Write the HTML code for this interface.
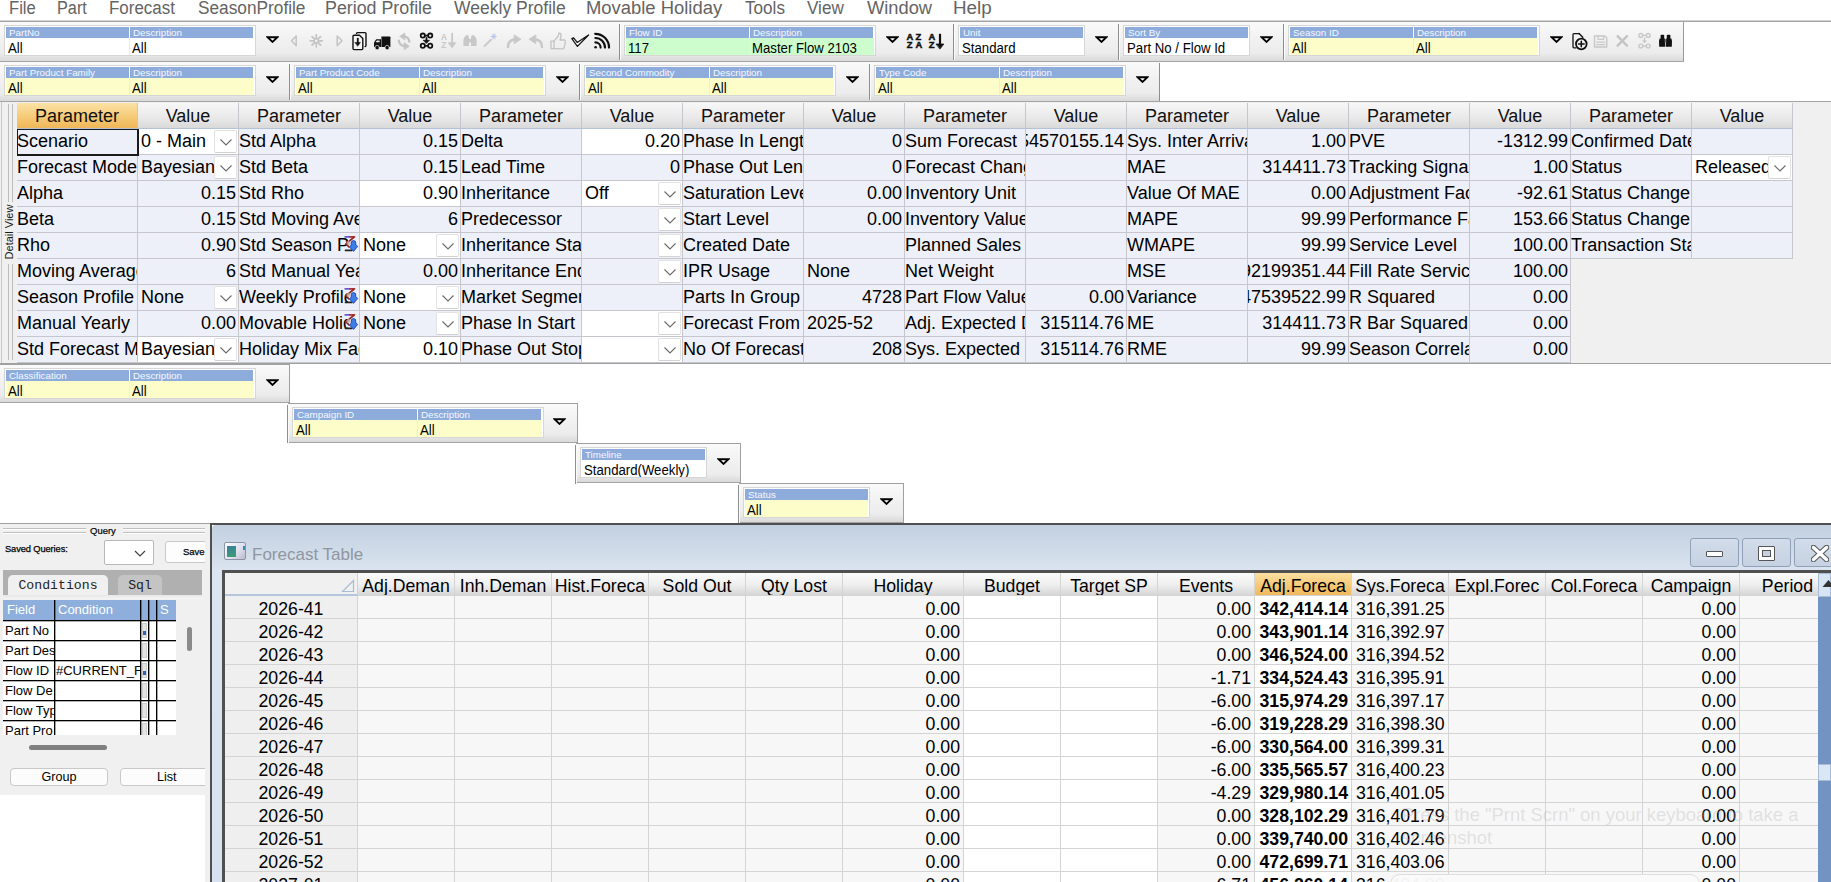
<!DOCTYPE html><html><head><meta charset="utf-8"><title>Forecast</title><style>
*{margin:0;padding:0;box-sizing:border-box}
html,body{width:1831px;height:882px;overflow:hidden;background:#fff;font-family:"Liberation Sans",sans-serif;color:#000;position:relative}
.a{position:absolute}
.menu{position:absolute;top:-2px;font-size:18px;color:#646464;line-height:20px;white-space:nowrap}
.ts{position:absolute;background:linear-gradient(#fafafa 0%,#f1f1f1 45%,#ececec 80%,#d9d9d9 100%);border-bottom:1px solid #a4a4a4}
.vs{position:absolute;width:1px;background:#8e8e8e;box-shadow:1px 0 0 #fbfbfb}
.fb{position:absolute;border:1px solid #d6d6d6;background:#fff;padding:1px}
.fbh{position:absolute;top:1px;height:11px;background:#8dacdc;color:#f4f8ff;font-size:9.8px;line-height:12px;white-space:nowrap;overflow:hidden;padding-left:3px}
.fbv{position:absolute;top:12px;height:17px;font-size:13.2px;line-height:22px;white-space:nowrap;overflow:hidden;padding-left:2px;color:#000}
.fbv span{display:inline-block;transform:scaleY(1.14);transform-origin:0 15.6px;vertical-align:top}
.tri{position:absolute}
.ic{position:absolute}
.g{position:absolute;overflow:hidden;white-space:nowrap;font-size:18px;line-height:24px;border-right:1px solid #c6c6cc;border-bottom:1px solid #c6c6cc}
.gh{background:linear-gradient(#f7f7f7,#e9e9e9 60%,#d9d9d9);text-align:center;color:#111;line-height:26px;border-bottom-color:#b4c2d6}
.gho{background:linear-gradient(#fbe2a6,#f5c873 60%,#efb75a);text-align:center;color:#111;line-height:26px;border-bottom-color:#b4c2d6}
.gc{background:#eef0f9;padding-left:0}
.gv{padding-left:3px}
.gw{background:#fff}
.gr{display:flex;justify-content:flex-end;padding-right:2px}
.dd{position:absolute;width:23px;height:23px;background:#fff;border:1px solid #e2e2e2;border-bottom-color:#d2d2d2;border-radius:2px}
.ft{position:absolute;overflow:hidden;white-space:nowrap;font-size:17.7px;line-height:26px;border-right:1px solid #d4d4d4;border-bottom:1px solid #d4d4d4}
.fth{background:linear-gradient(#fbfbfb,#eeeeee 55%,#d6d6d6);text-align:center}
.ftc{background:#f7f7f7;text-align:right;padding-right:3px}
.ftw{background:#fff}
.q{position:absolute;font-size:13px;white-space:nowrap;overflow:hidden}
</style></head><body>
<div class="menu" style="left:9.2px;transform:scaleX(0.923);transform-origin:0 0">File</div>
<div class="menu" style="left:57.2px;transform:scaleX(0.903);transform-origin:0 0">Part</div>
<div class="menu" style="left:109.1px;transform:scaleX(0.941);transform-origin:0 0">Forecast</div>
<div class="menu" style="left:197.5px;transform:scaleX(0.959);transform-origin:0 0">SeasonProfile</div>
<div class="menu" style="left:325.0px;transform:scaleX(0.99);transform-origin:0 0">Period Profile</div>
<div class="menu" style="left:454.0px;transform:scaleX(0.974);transform-origin:0 0">Weekly Profile</div>
<div class="menu" style="left:586.0px;transform:scaleX(1.023);transform-origin:0 0">Movable Holiday</div>
<div class="menu" style="left:745.0px;transform:scaleX(0.951);transform-origin:0 0">Tools</div>
<div class="menu" style="left:807.0px;transform:scaleX(0.949);transform-origin:0 0">View</div>
<div class="menu" style="left:867.0px;transform:scaleX(1.016);transform-origin:0 0">Window</div>
<div class="menu" style="left:952.9px;transform:scaleX(1.044);transform-origin:0 0">Help</div>
<div class="a" style="left:0;top:20px;width:1831px;height:1px;background:#d2d2d2"></div>
<div class="a" style="left:0;top:21px;width:1831px;height:1px;background:#a4a4a4"></div>
<div class="ts" style="left:0px;top:22px;width:1683px;height:40px"></div>
<div class="vs" style="left:619px;top:24px;height:36px"></div>
<div class="vs" style="left:953px;top:24px;height:36px"></div>
<div class="vs" style="left:1118px;top:24px;height:36px"></div>
<div class="vs" style="left:1283px;top:24px;height:36px"></div>
<div class="a" style="left:1683px;top:22px;width:1px;height:40px;background:#9a9a9a"></div>
<div class="fb" style="left:4px;top:25px;width:252px;height:31px">
<div class="fbh" style="left:1px;width:123px">PartNo</div>
<div class="fbh" style="left:125px;width:123px">Description</div>
<div class="fbv" style="left:1px;width:124px;background:#fff;border-right:1px solid #eeeedd"><span>All</span></div>
<div class="fbv" style="left:125px;width:124px;background:#fff"><span>All</span></div>
</div>
<svg class="tri" style="left:266px;top:35px" width="13" height="8" viewBox="0 0 13 8"><path d="M1.6 2.3 L11.4 2.3 L6.5 6.9 Z" fill="#fff" stroke="#000" stroke-width="1.9" stroke-linejoin="miter"/></svg>
<div class="fb" style="left:624px;top:25px;width:252px;height:31px">
<div class="fbh" style="left:1px;width:123px">Flow ID</div>
<div class="fbh" style="left:125px;width:123px">Description</div>
<div class="fbv" style="left:1px;width:124px;background:#cdfdcd;border-right:1px solid #eeeedd"><span>117</span></div>
<div class="fbv" style="left:125px;width:124px;background:#cdfdcd"><span>Master Flow 2103</span></div>
</div>
<svg class="tri" style="left:886px;top:35px" width="13" height="8" viewBox="0 0 13 8"><path d="M1.6 2.3 L11.4 2.3 L6.5 6.9 Z" fill="#fff" stroke="#000" stroke-width="1.9" stroke-linejoin="miter"/></svg>
<div class="fb" style="left:958px;top:25px;width:127px;height:31px">
<div class="fbh" style="left:1px;width:123px">Unit</div>
<div class="fbv" style="left:1px;width:123px;background:#fff"><span>Standard</span></div>
</div>
<svg class="tri" style="left:1095px;top:35px" width="13" height="8" viewBox="0 0 13 8"><path d="M1.6 2.3 L11.4 2.3 L6.5 6.9 Z" fill="#fff" stroke="#000" stroke-width="1.9" stroke-linejoin="miter"/></svg>
<div class="fb" style="left:1123px;top:25px;width:127px;height:31px">
<div class="fbh" style="left:1px;width:123px">Sort By</div>
<div class="fbv" style="left:1px;width:123px;background:#fff"><span>Part No / Flow Id</span></div>
</div>
<svg class="tri" style="left:1260px;top:35px" width="13" height="8" viewBox="0 0 13 8"><path d="M1.6 2.3 L11.4 2.3 L6.5 6.9 Z" fill="#fff" stroke="#000" stroke-width="1.9" stroke-linejoin="miter"/></svg>
<div class="fb" style="left:1288px;top:25px;width:252px;height:31px">
<div class="fbh" style="left:1px;width:123px">Season ID</div>
<div class="fbh" style="left:125px;width:123px">Description</div>
<div class="fbv" style="left:1px;width:124px;background:#fdfdc9;border-right:1px solid #eeeedd"><span>All</span></div>
<div class="fbv" style="left:125px;width:124px;background:#fdfdc9"><span>All</span></div>
</div>
<svg class="tri" style="left:1550px;top:35px" width="13" height="8" viewBox="0 0 13 8"><path d="M1.6 2.3 L11.4 2.3 L6.5 6.9 Z" fill="#fff" stroke="#000" stroke-width="1.9" stroke-linejoin="miter"/></svg>
<div class="ts" style="left:0px;top:62px;width:1160px;height:40px"></div>
<div class="vs" style="left:289px;top:64px;height:36px"></div>
<div class="vs" style="left:579px;top:64px;height:36px"></div>
<div class="vs" style="left:869px;top:64px;height:36px"></div>
<div class="a" style="left:1159px;top:63px;width:1px;height:38px;background:#8e8e8e"></div>
<div class="fb" style="left:4px;top:65px;width:252px;height:31px">
<div class="fbh" style="left:1px;width:123px">Part Product Family</div>
<div class="fbh" style="left:125px;width:123px">Description</div>
<div class="fbv" style="left:1px;width:124px;background:#fdfdc9;border-right:1px solid #eeeedd"><span>All</span></div>
<div class="fbv" style="left:125px;width:124px;background:#fdfdc9"><span>All</span></div>
</div>
<svg class="tri" style="left:266px;top:75px" width="13" height="8" viewBox="0 0 13 8"><path d="M1.6 2.3 L11.4 2.3 L6.5 6.9 Z" fill="#fff" stroke="#000" stroke-width="1.9" stroke-linejoin="miter"/></svg>
<div class="fb" style="left:294px;top:65px;width:252px;height:31px">
<div class="fbh" style="left:1px;width:123px">Part Product Code</div>
<div class="fbh" style="left:125px;width:123px">Description</div>
<div class="fbv" style="left:1px;width:124px;background:#fdfdc9;border-right:1px solid #eeeedd"><span>All</span></div>
<div class="fbv" style="left:125px;width:124px;background:#fdfdc9"><span>All</span></div>
</div>
<svg class="tri" style="left:556px;top:75px" width="13" height="8" viewBox="0 0 13 8"><path d="M1.6 2.3 L11.4 2.3 L6.5 6.9 Z" fill="#fff" stroke="#000" stroke-width="1.9" stroke-linejoin="miter"/></svg>
<div class="fb" style="left:584px;top:65px;width:252px;height:31px">
<div class="fbh" style="left:1px;width:123px">Second Commodity</div>
<div class="fbh" style="left:125px;width:123px">Description</div>
<div class="fbv" style="left:1px;width:124px;background:#fdfdc9;border-right:1px solid #eeeedd"><span>All</span></div>
<div class="fbv" style="left:125px;width:124px;background:#fdfdc9"><span>All</span></div>
</div>
<svg class="tri" style="left:846px;top:75px" width="13" height="8" viewBox="0 0 13 8"><path d="M1.6 2.3 L11.4 2.3 L6.5 6.9 Z" fill="#fff" stroke="#000" stroke-width="1.9" stroke-linejoin="miter"/></svg>
<div class="fb" style="left:874px;top:65px;width:252px;height:31px">
<div class="fbh" style="left:1px;width:123px">Type Code</div>
<div class="fbh" style="left:125px;width:123px">Description</div>
<div class="fbv" style="left:1px;width:124px;background:#fdfdc9;border-right:1px solid #eeeedd"><span>All</span></div>
<div class="fbv" style="left:125px;width:124px;background:#fdfdc9"><span>All</span></div>
</div>
<svg class="tri" style="left:1136px;top:75px" width="13" height="8" viewBox="0 0 13 8"><path d="M1.6 2.3 L11.4 2.3 L6.5 6.9 Z" fill="#fff" stroke="#000" stroke-width="1.9" stroke-linejoin="miter"/></svg>
<svg class="a" style="left:0;top:0;overflow:visible" width="1831" height="62" viewBox="0 0 1831 62">
<g fill="none" stroke-linejoin="round" stroke-linecap="round">
<!-- left arrow gray -->
<path d="M291.5 40.8 L296.2 36 L296.2 45.8 Z" stroke="#c4c4c4" stroke-width="1.5"/>
<!-- sun gray -->
<g stroke="#c4c4c4" stroke-width="1.8">
<path d="M316.3 34.8 V38.4 M316.3 43.2 V46.8 M310.3 40.8 H313.9 M318.7 40.8 H322.3 M312.1 36.6 L314.6 39.1 M318 42.5 L320.5 45 M320.5 36.6 L318 39.1 M314.6 42.5 L312.1 45"/>
<circle cx="316.3" cy="40.8" r="2" stroke-width="1.2"/>
</g>
<!-- right arrow gray -->
<path d="M342 40.8 L337.2 36 L337.2 45.8 Z" stroke="#c4c4c4" stroke-width="1.5"/>
<!-- doc copy black -->
<path d="M356.5 33.5 Q356.5 32.6 357.5 32.6 L365 32.6 Q366 32.6 366 33.6 L366 45.5 Q366 46.6 365 46.6" stroke="#111" stroke-width="1.4"/>
<path d="M353 36.2 Q353 35.2 354 35.2 L359.5 35.2 L362.8 38.5 L362.8 48.6 Q362.8 49.6 361.8 49.6 L354 49.6 Q353 49.6 353 48.6 Z" stroke="#111" stroke-width="1.4" fill="#f4f4f4"/>
<path d="M357.8 38.6 V43.5" stroke="#111" stroke-width="1.8"/>
<path d="M355.2 42.4 L360.4 42.4 L357.8 46 Z" fill="#111" stroke="#111" stroke-width="0.6"/>
<!-- truck black -->
<path d="M381.4 36.4 L389.5 36.4 Q390.4 36.4 390.4 37.3 L390.4 47 L381.4 47 Z" fill="#111" stroke="none"/>
<path d="M374 47 L374 42.5 L376.2 39.2 L381 39.2 L381 47 Z" fill="#111" stroke="none"/>
<path d="M375.6 42.3 L376.8 40.4 L379.6 40.4 L379.6 42.3 Z" fill="#eee" stroke="none"/>
<circle cx="377.2" cy="47.6" r="2.2" fill="#111" stroke="#eee" stroke-width="0.7"/>
<circle cx="387.2" cy="47.6" r="2.2" fill="#111" stroke="#eee" stroke-width="0.7"/>
<!-- refresh gray -->
<path d="M404 36.3 Q408.8 37 409.3 41.6" stroke="#c4c4c4" stroke-width="2.3"/>
<path d="M400 36.3 L404.8 33 L404.8 39.6 Z" fill="#c4c4c4" stroke="#c4c4c4" stroke-width="0.8"/>
<path d="M398.8 40.6 Q399.3 45.4 404.5 46" stroke="#c4c4c4" stroke-width="2.3"/>
<path d="M409 46.1 L404.2 42.6 L404.2 49.4 Z" fill="#c4c4c4" stroke="#c4c4c4" stroke-width="0.8"/>
<!-- nodes black -->
<g stroke="#111" stroke-width="1.8">
<circle cx="422.8" cy="35.6" r="2.1"/><circle cx="430.2" cy="35.6" r="2.1"/>
<circle cx="422.8" cy="45.8" r="2.1"/><circle cx="430.2" cy="45.8" r="2.1"/>
<path d="M424.9 35.6 H428.1 M424.9 45.8 H428.1 M426.5 37.8 V41"/>
</g>
<path d="M423.6 40.3 L429.4 40.3 L426.5 43.2 Z" fill="#111" stroke="#111" stroke-width="0.8"/>
<!-- AZ sort gray -->
<g fill="#c8c8c8" stroke="none" font-family="Liberation Sans" font-weight="bold" font-size="8.2">
<text x="441" y="39.6">A</text><text x="441.2" y="47.6">Z</text>
</g>
<path d="M452.2 33.6 V46" stroke="#c8c8c8" stroke-width="1.8"/>
<path d="M448.6 42.8 L455.8 42.8 L452.2 47.6 Z" fill="#c8c8c8" stroke="#c8c8c8" stroke-width="0.8"/>
<!-- binoculars gray -->
<g fill="#c8c8c8" stroke="none">
<path d="M464 38 L466 35.2 L468.4 35.2 L469 38 L469 46 L463.4 46 L463.4 40 Z"/>
<path d="M476 38 L474 35.2 L471.6 35.2 L471 38 L471 46 L476.6 46 L476.6 40 Z"/>
<rect x="468.6" y="39" width="2.8" height="3.5"/>
</g>
<!-- magic wand -->
<path d="M484.6 46 L491 39.8" stroke="#cacaca" stroke-width="2"/>
<path d="M493.8 34 V39 M491.3 36.5 H496.3 M492 34.7 L495.6 38.3 M495.6 34.7 L492 38.3" stroke="#b8c4e8" stroke-width="1"/>
<!-- redo gray -->
<path d="M508 47 Q508 40 515 39.5" stroke="#c8c8c8" stroke-width="2.4"/>
<path d="M514.5 35.2 L520.8 39.2 L514.5 43.4 Z" fill="#c8c8c8" stroke="#c8c8c8" stroke-width="1"/>
<!-- undo gray -->
<path d="M542 47 Q542 40 535 39.5" stroke="#c8c8c8" stroke-width="2.4"/>
<path d="M535.5 35.2 L529.2 39.2 L535.5 43.4 Z" fill="#c8c8c8" stroke="#c8c8c8" stroke-width="1"/>
<!-- thumbs up gray -->
<path d="M551 41.2 H554 V48.6 H551 Z" stroke="#c4c4c4" stroke-width="1.3"/>
<path d="M554 41.2 L558.2 36 L559 32.8 Q561.5 33.2 561 36.5 L560 40 L564.6 40 Q565.6 40.5 565.3 42 L564.2 47.8 Q563.8 48.8 562.5 48.8 L554 48.6" stroke="#c4c4c4" stroke-width="1.3"/>
<!-- checkmark black outline -->
<path d="M571.8 38.6 L573.6 37.8 L577.2 42.4 L588.6 35 L577.4 46.4 Z" stroke="#111" stroke-width="1.2" fill="#f6f6f6"/>
<!-- rss black -->
<g stroke="#111" stroke-width="2.2" stroke-linecap="round">
<circle cx="595.6" cy="47.2" r="1.3" fill="#111" stroke="none"/>
<path d="M595.4 42.4 A5.2 5.2 0 0 1 600.6 47.6"/>
<path d="M595.4 38 A9.6 9.6 0 0 1 605 47.6"/>
<path d="M595.2 33.8 A13.8 13.8 0 0 1 609 47.6"/>
</g>
<!-- flow: AZ/ZA black -->
<g fill="#111" stroke="#111" stroke-width="0.5" font-family="Liberation Sans" font-weight="bold" font-size="9.4">
<text x="906.6" y="40.2">A</text><text x="915.4" y="40.2">Z</text>
<text x="906.8" y="48">Z</text><text x="915.4" y="48">A</text>
<text x="928.6" y="40.2">A</text><text x="928.8" y="48">Z</text>
</g>
<path d="M940 33.8 V45" stroke="#111" stroke-width="2.2" stroke-linecap="butt"/>
<path d="M936.4 44 L943.8 44 L940.1 48.8 Z" fill="#111" stroke="#111" stroke-width="0.8"/>
<!-- season: doc add black -->
<path d="M1579.5 33.6 L1574 33.6 Q1573 33.6 1573 34.6 L1573 46.8 Q1573 47.8 1574 47.8 L1576 47.8" stroke="#111" stroke-width="1.3"/>
<path d="M1579 33.6 L1582.8 37.2" stroke="#111" stroke-width="1.4"/>
<circle cx="1581.3" cy="44" r="5.3" stroke="#111" stroke-width="1.8" fill="#f4f4f4"/>
<path d="M1581.3 41.2 V46.8 M1578.5 44 H1584.1" stroke="#111" stroke-width="1.6"/>
<!-- save gray -->
<path d="M1594.5 36 L1604.8 36 L1606.8 38 L1606.8 47 L1594.5 47 Z" stroke="#c8c8c8" stroke-width="1.4"/>
<path d="M1598 36 V39.4 H1603.5 V36 M1596.6 42.2 H1604.8 M1596.6 44.6 H1604.8" stroke="#c8c8c8" stroke-width="1.2"/>
<!-- X gray -->
<path d="M1617.6 36.2 L1627 45.6 M1627 36.2 L1617.6 45.6" stroke="#c4c4c4" stroke-width="2.4"/>
<!-- nodes gray -->
<g stroke="#c8c8c8" stroke-width="1.4">
<circle cx="1640.8" cy="35.4" r="1.9"/><circle cx="1648.2" cy="35.4" r="1.9"/>
<circle cx="1640.8" cy="46" r="1.9"/><circle cx="1648.2" cy="46" r="1.9"/>
<path d="M1642.7 35.4 H1646.3 M1642.7 46 H1646.3 M1644.5 38 V41"/>
</g>
<path d="M1641.9 40.5 L1647.1 40.5 L1644.5 43.2 Z" fill="#c8c8c8" stroke="none"/>
<!-- binoculars black -->
<g fill="#111" stroke="none">
<rect x="1660.6" y="34.8" width="3.6" height="4.5" rx="0.8"/>
<rect x="1666.8" y="34.8" width="3.6" height="4.5" rx="0.8"/>
<path d="M1659.6 38.6 L1665 38.6 L1665.2 46.8 L1659.2 46.8 L1659 41 Z"/>
<path d="M1666 38.6 L1671.4 38.6 L1672 41 L1671.8 46.8 L1665.8 46.8 Z"/>
<rect x="1664.6" y="39.2" width="1.8" height="3.2" fill="#666"/>
</g>
</g>
</svg>

<div class="a" style="left:0;top:101px;width:1831px;height:1px;background:#a4a4a4"></div>
<div class="a" style="left:0;top:102px;width:1831px;height:261px;background:#f0f0f0"></div>
<div class="a" style="left:0;top:363px;width:1831px;height:1px;background:#a0a0a0"></div>
<div class="a" style="left:1px;top:102px;width:1px;height:261px;background:#c8c8c8"></div>
<div class="a" style="left:8px;top:104px;width:1px;height:98px;background:#bdbdbd"></div>
<div class="a" style="left:12px;top:104px;width:1px;height:98px;background:#bdbdbd"></div>
<div class="a" style="left:8px;top:264px;width:1px;height:96px;background:#bdbdbd"></div>
<div class="a" style="left:12px;top:264px;width:1px;height:96px;background:#bdbdbd"></div>
<div class="a" style="left:-19px;top:226px;width:55px;height:12px;font-size:11px;line-height:12px;color:#1a1a1a;transform:rotate(-90deg);text-align:center;white-space:nowrap">Detail View</div>
<div class="g gho" style="left:17px;top:103px;width:121px;height:26px">Parameter</div>
<div class="g gh" style="left:138px;top:103px;width:101px;height:26px">Value</div>
<div class="g gc" style="left:17px;top:129px;width:121px;height:26px">Scenario</div>
<div class="g gc gv" style="left:138px;top:129px;width:101px;height:26px;background:#fff;">0 - Main</div>
<div class="dd" style="left:214px;top:130px"><svg width="22" height="21" viewBox="0 0 22 21" style="position:absolute;left:0;top:0"><path d="M5.5 8.5 L11 14 L16.5 8.5" fill="none" stroke="#6a6a6a" stroke-width="1.1"/></svg></div>
<div class="g gc" style="left:17px;top:155px;width:121px;height:26px">Forecast Mode</div>
<div class="g gc gv" style="left:138px;top:155px;width:101px;height:26px;">Bayesian</div>
<div class="dd" style="left:214px;top:156px"><svg width="22" height="21" viewBox="0 0 22 21" style="position:absolute;left:0;top:0"><path d="M5.5 8.5 L11 14 L16.5 8.5" fill="none" stroke="#6a6a6a" stroke-width="1.1"/></svg></div>
<div class="g gc" style="left:17px;top:181px;width:121px;height:26px">Alpha</div>
<div class="g gc gr" style="left:138px;top:181px;width:101px;height:26px;"><span>0.15</span></div>
<div class="g gc" style="left:17px;top:207px;width:121px;height:26px">Beta</div>
<div class="g gc gr" style="left:138px;top:207px;width:101px;height:26px;"><span>0.15</span></div>
<div class="g gc" style="left:17px;top:233px;width:121px;height:26px">Rho</div>
<div class="g gc gr" style="left:138px;top:233px;width:101px;height:26px;"><span>0.90</span></div>
<div class="g gc" style="left:17px;top:259px;width:121px;height:26px">Moving Average</div>
<div class="g gc gr" style="left:138px;top:259px;width:101px;height:26px;"><span>6</span></div>
<div class="g gc" style="left:17px;top:285px;width:121px;height:26px">Season Profile</div>
<div class="g gc gv" style="left:138px;top:285px;width:101px;height:26px;">None</div>
<div class="dd" style="left:214px;top:286px"><svg width="22" height="21" viewBox="0 0 22 21" style="position:absolute;left:0;top:0"><path d="M5.5 8.5 L11 14 L16.5 8.5" fill="none" stroke="#6a6a6a" stroke-width="1.1"/></svg></div>
<div class="g gc" style="left:17px;top:311px;width:121px;height:26px">Manual Yearly</div>
<div class="g gc gr" style="left:138px;top:311px;width:101px;height:26px;"><span>0.00</span></div>
<div class="g gc" style="left:17px;top:337px;width:121px;height:26px">Std Forecast Method</div>
<div class="g gc gv" style="left:138px;top:337px;width:101px;height:26px;background:#fff;">Bayesian</div>
<div class="dd" style="left:214px;top:338px"><svg width="22" height="21" viewBox="0 0 22 21" style="position:absolute;left:0;top:0"><path d="M5.5 8.5 L11 14 L16.5 8.5" fill="none" stroke="#6a6a6a" stroke-width="1.1"/></svg></div>
<div class="g gh" style="left:239px;top:103px;width:121px;height:26px">Parameter</div>
<div class="g gh" style="left:360px;top:103px;width:101px;height:26px">Value</div>
<div class="g gc" style="left:239px;top:129px;width:121px;height:26px">Std Alpha</div>
<div class="g gc gr" style="left:360px;top:129px;width:101px;height:26px;"><span>0.15</span></div>
<div class="g gc" style="left:239px;top:155px;width:121px;height:26px">Std Beta</div>
<div class="g gc gr" style="left:360px;top:155px;width:101px;height:26px;"><span>0.15</span></div>
<div class="g gc" style="left:239px;top:181px;width:121px;height:26px">Std Rho</div>
<div class="g gc gr" style="left:360px;top:181px;width:101px;height:26px;background:#fff;"><span>0.90</span></div>
<div class="g gc" style="left:239px;top:207px;width:121px;height:26px">Std Moving Average</div>
<div class="g gc gr" style="left:360px;top:207px;width:101px;height:26px;"><span>6</span></div>
<div class="g gc" style="left:239px;top:233px;width:121px;height:26px"><span style="display:inline-block;width:109px;overflow:hidden;vertical-align:top">Std Season Profile</span></div>
<div class="g gc gv" style="left:360px;top:233px;width:101px;height:26px;background:#fff;">None</div>
<div class="dd" style="left:436px;top:234px"><svg width="22" height="21" viewBox="0 0 22 21" style="position:absolute;left:0;top:0"><path d="M5.5 8.5 L11 14 L16.5 8.5" fill="none" stroke="#6a6a6a" stroke-width="1.1"/></svg></div>
<svg class="a" style="left:344px;top:234px" width="15" height="19" viewBox="0 0 15 19"><path d="M1.2 2.8 L6 2.8" stroke="#6a5ad0" stroke-width="1.8" stroke-linecap="round"/><path d="M6 2.8 L10.5 2.8" stroke="#b03030" stroke-width="1.8" stroke-linecap="round"/><path d="M10.2 3 L2 9.8 L5.5 13.5" fill="none" stroke="#8a2a2a" stroke-width="1.7" stroke-linejoin="round"/><path d="M1.5 16.4 L7.5 16.4" stroke="#222" stroke-width="1.7" stroke-linecap="round"/><circle cx="4.5" cy="9" r="2" fill="#c8b0a8" opacity=".8"/><path d="M7.5 7.5 Q9.5 5.5 11.5 7.5 L11.8 10.5 L13.6 12.5 L9.5 17.4 L5.6 13.2 L7.2 11 Z" fill="#3d7fe6" stroke="#1a3fb0" stroke-width=".9" stroke-linejoin="round"/></svg>
<div class="g gc" style="left:239px;top:259px;width:121px;height:26px">Std Manual Yearly</div>
<div class="g gc gr" style="left:360px;top:259px;width:101px;height:26px;"><span>0.00</span></div>
<div class="g gc" style="left:239px;top:285px;width:121px;height:26px"><span style="display:inline-block;width:109px;overflow:hidden;vertical-align:top">Weekly Profile</span></div>
<div class="g gc gv" style="left:360px;top:285px;width:101px;height:26px;background:#fff;">None</div>
<div class="dd" style="left:436px;top:286px"><svg width="22" height="21" viewBox="0 0 22 21" style="position:absolute;left:0;top:0"><path d="M5.5 8.5 L11 14 L16.5 8.5" fill="none" stroke="#6a6a6a" stroke-width="1.1"/></svg></div>
<svg class="a" style="left:344px;top:286px" width="15" height="19" viewBox="0 0 15 19"><path d="M1.2 2.8 L6 2.8" stroke="#6a5ad0" stroke-width="1.8" stroke-linecap="round"/><path d="M6 2.8 L10.5 2.8" stroke="#b03030" stroke-width="1.8" stroke-linecap="round"/><path d="M10.2 3 L2 9.8 L5.5 13.5" fill="none" stroke="#8a2a2a" stroke-width="1.7" stroke-linejoin="round"/><path d="M1.5 16.4 L7.5 16.4" stroke="#222" stroke-width="1.7" stroke-linecap="round"/><circle cx="4.5" cy="9" r="2" fill="#c8b0a8" opacity=".8"/><path d="M7.5 7.5 Q9.5 5.5 11.5 7.5 L11.8 10.5 L13.6 12.5 L9.5 17.4 L5.6 13.2 L7.2 11 Z" fill="#3d7fe6" stroke="#1a3fb0" stroke-width=".9" stroke-linejoin="round"/></svg>
<div class="g gc" style="left:239px;top:311px;width:121px;height:26px"><span style="display:inline-block;width:109px;overflow:hidden;vertical-align:top">Movable Holiday</span></div>
<div class="g gc gv" style="left:360px;top:311px;width:101px;height:26px;">None</div>
<div class="dd" style="left:436px;top:312px"><svg width="22" height="21" viewBox="0 0 22 21" style="position:absolute;left:0;top:0"><path d="M5.5 8.5 L11 14 L16.5 8.5" fill="none" stroke="#6a6a6a" stroke-width="1.1"/></svg></div>
<svg class="a" style="left:344px;top:312px" width="15" height="19" viewBox="0 0 15 19"><path d="M1.2 2.8 L6 2.8" stroke="#6a5ad0" stroke-width="1.8" stroke-linecap="round"/><path d="M6 2.8 L10.5 2.8" stroke="#b03030" stroke-width="1.8" stroke-linecap="round"/><path d="M10.2 3 L2 9.8 L5.5 13.5" fill="none" stroke="#8a2a2a" stroke-width="1.7" stroke-linejoin="round"/><path d="M1.5 16.4 L7.5 16.4" stroke="#222" stroke-width="1.7" stroke-linecap="round"/><circle cx="4.5" cy="9" r="2" fill="#c8b0a8" opacity=".8"/><path d="M7.5 7.5 Q9.5 5.5 11.5 7.5 L11.8 10.5 L13.6 12.5 L9.5 17.4 L5.6 13.2 L7.2 11 Z" fill="#3d7fe6" stroke="#1a3fb0" stroke-width=".9" stroke-linejoin="round"/></svg>
<div class="g gc" style="left:239px;top:337px;width:121px;height:26px">Holiday Mix Factor</div>
<div class="g gc gr" style="left:360px;top:337px;width:101px;height:26px;background:#fff;"><span>0.10</span></div>
<div class="g gh" style="left:461px;top:103px;width:121px;height:26px">Parameter</div>
<div class="g gh" style="left:582px;top:103px;width:101px;height:26px">Value</div>
<div class="g gc" style="left:461px;top:129px;width:121px;height:26px">Delta</div>
<div class="g gc gr" style="left:582px;top:129px;width:101px;height:26px;background:#fff;"><span>0.20</span></div>
<div class="g gc" style="left:461px;top:155px;width:121px;height:26px">Lead Time</div>
<div class="g gc gr" style="left:582px;top:155px;width:101px;height:26px;"><span>0</span></div>
<div class="g gc" style="left:461px;top:181px;width:121px;height:26px">Inheritance</div>
<div class="g gc gv" style="left:582px;top:181px;width:101px;height:26px;background:#fff;">Off</div>
<div class="dd" style="left:658px;top:182px"><svg width="22" height="21" viewBox="0 0 22 21" style="position:absolute;left:0;top:0"><path d="M5.5 8.5 L11 14 L16.5 8.5" fill="none" stroke="#6a6a6a" stroke-width="1.1"/></svg></div>
<div class="g gc" style="left:461px;top:207px;width:121px;height:26px">Predecessor</div>
<div class="g gc gv" style="left:582px;top:207px;width:101px;height:26px;"></div>
<div class="dd" style="left:658px;top:208px"><svg width="22" height="21" viewBox="0 0 22 21" style="position:absolute;left:0;top:0"><path d="M5.5 8.5 L11 14 L16.5 8.5" fill="none" stroke="#6a6a6a" stroke-width="1.1"/></svg></div>
<div class="g gc" style="left:461px;top:233px;width:121px;height:26px">Inheritance Start</div>
<div class="g gc gv" style="left:582px;top:233px;width:101px;height:26px;"></div>
<div class="dd" style="left:658px;top:234px"><svg width="22" height="21" viewBox="0 0 22 21" style="position:absolute;left:0;top:0"><path d="M5.5 8.5 L11 14 L16.5 8.5" fill="none" stroke="#6a6a6a" stroke-width="1.1"/></svg></div>
<div class="g gc" style="left:461px;top:259px;width:121px;height:26px">Inheritance End</div>
<div class="g gc gv" style="left:582px;top:259px;width:101px;height:26px;"></div>
<div class="dd" style="left:658px;top:260px"><svg width="22" height="21" viewBox="0 0 22 21" style="position:absolute;left:0;top:0"><path d="M5.5 8.5 L11 14 L16.5 8.5" fill="none" stroke="#6a6a6a" stroke-width="1.1"/></svg></div>
<div class="g gc" style="left:461px;top:285px;width:121px;height:26px">Market Segment</div>
<div class="g gc gv" style="left:582px;top:285px;width:101px;height:26px;"></div>
<div class="g gc" style="left:461px;top:311px;width:121px;height:26px">Phase In Start</div>
<div class="g gc gv" style="left:582px;top:311px;width:101px;height:26px;background:#fff;"></div>
<div class="dd" style="left:658px;top:312px"><svg width="22" height="21" viewBox="0 0 22 21" style="position:absolute;left:0;top:0"><path d="M5.5 8.5 L11 14 L16.5 8.5" fill="none" stroke="#6a6a6a" stroke-width="1.1"/></svg></div>
<div class="g gc" style="left:461px;top:337px;width:121px;height:26px">Phase Out Stop</div>
<div class="g gc gv" style="left:582px;top:337px;width:101px;height:26px;background:#fff;"></div>
<div class="dd" style="left:658px;top:338px"><svg width="22" height="21" viewBox="0 0 22 21" style="position:absolute;left:0;top:0"><path d="M5.5 8.5 L11 14 L16.5 8.5" fill="none" stroke="#6a6a6a" stroke-width="1.1"/></svg></div>
<div class="g gh" style="left:683px;top:103px;width:121px;height:26px">Parameter</div>
<div class="g gh" style="left:804px;top:103px;width:101px;height:26px">Value</div>
<div class="g gc" style="left:683px;top:129px;width:121px;height:26px">Phase In Length</div>
<div class="g gc gr" style="left:804px;top:129px;width:101px;height:26px;"><span>0</span></div>
<div class="g gc" style="left:683px;top:155px;width:121px;height:26px">Phase Out Length</div>
<div class="g gc gr" style="left:804px;top:155px;width:101px;height:26px;"><span>0</span></div>
<div class="g gc" style="left:683px;top:181px;width:121px;height:26px">Saturation Level</div>
<div class="g gc gr" style="left:804px;top:181px;width:101px;height:26px;"><span>0.00</span></div>
<div class="g gc" style="left:683px;top:207px;width:121px;height:26px">Start Level</div>
<div class="g gc gr" style="left:804px;top:207px;width:101px;height:26px;"><span>0.00</span></div>
<div class="g gc" style="left:683px;top:233px;width:121px;height:26px">Created Date</div>
<div class="g gc gv" style="left:804px;top:233px;width:101px;height:26px;"></div>
<div class="g gc" style="left:683px;top:259px;width:121px;height:26px">IPR Usage</div>
<div class="g gc gv" style="left:804px;top:259px;width:101px;height:26px;">None</div>
<div class="g gc" style="left:683px;top:285px;width:121px;height:26px">Parts In Group</div>
<div class="g gc gr" style="left:804px;top:285px;width:101px;height:26px;"><span>4728</span></div>
<div class="g gc" style="left:683px;top:311px;width:121px;height:26px">Forecast From</div>
<div class="g gc gv" style="left:804px;top:311px;width:101px;height:26px;">2025-52</div>
<div class="g gc" style="left:683px;top:337px;width:121px;height:26px">No Of Forecast</div>
<div class="g gc gr" style="left:804px;top:337px;width:101px;height:26px;"><span>208</span></div>
<div class="g gh" style="left:905px;top:103px;width:121px;height:26px">Parameter</div>
<div class="g gh" style="left:1026px;top:103px;width:101px;height:26px">Value</div>
<div class="g gc" style="left:905px;top:129px;width:121px;height:26px">Sum Forecast</div>
<div class="g gc gr" style="left:1026px;top:129px;width:101px;height:26px;"><span>54570155.14</span></div>
<div class="g gc" style="left:905px;top:155px;width:121px;height:26px">Forecast Change</div>
<div class="g gc gv" style="left:1026px;top:155px;width:101px;height:26px;"></div>
<div class="g gc" style="left:905px;top:181px;width:121px;height:26px">Inventory Unit</div>
<div class="g gc gv" style="left:1026px;top:181px;width:101px;height:26px;"></div>
<div class="g gc" style="left:905px;top:207px;width:121px;height:26px">Inventory Value</div>
<div class="g gc gv" style="left:1026px;top:207px;width:101px;height:26px;"></div>
<div class="g gc" style="left:905px;top:233px;width:121px;height:26px">Planned Sales</div>
<div class="g gc gv" style="left:1026px;top:233px;width:101px;height:26px;"></div>
<div class="g gc" style="left:905px;top:259px;width:121px;height:26px">Net Weight</div>
<div class="g gc gv" style="left:1026px;top:259px;width:101px;height:26px;"></div>
<div class="g gc" style="left:905px;top:285px;width:121px;height:26px">Part Flow Value</div>
<div class="g gc gr" style="left:1026px;top:285px;width:101px;height:26px;"><span>0.00</span></div>
<div class="g gc" style="left:905px;top:311px;width:121px;height:26px">Adj. Expected Demand</div>
<div class="g gc gr" style="left:1026px;top:311px;width:101px;height:26px;"><span>315114.76</span></div>
<div class="g gc" style="left:905px;top:337px;width:121px;height:26px">Sys. Expected</div>
<div class="g gc gr" style="left:1026px;top:337px;width:101px;height:26px;"><span>315114.76</span></div>
<div class="g gh" style="left:1127px;top:103px;width:121px;height:26px">Parameter</div>
<div class="g gh" style="left:1248px;top:103px;width:101px;height:26px">Value</div>
<div class="g gc" style="left:1127px;top:129px;width:121px;height:26px">Sys. Inter Arrival</div>
<div class="g gc gr" style="left:1248px;top:129px;width:101px;height:26px;"><span>1.00</span></div>
<div class="g gc" style="left:1127px;top:155px;width:121px;height:26px">MAE</div>
<div class="g gc gr" style="left:1248px;top:155px;width:101px;height:26px;"><span>314411.73</span></div>
<div class="g gc" style="left:1127px;top:181px;width:121px;height:26px">Value Of MAE</div>
<div class="g gc gr" style="left:1248px;top:181px;width:101px;height:26px;"><span>0.00</span></div>
<div class="g gc" style="left:1127px;top:207px;width:121px;height:26px">MAPE</div>
<div class="g gc gr" style="left:1248px;top:207px;width:101px;height:26px;"><span>99.99</span></div>
<div class="g gc" style="left:1127px;top:233px;width:121px;height:26px">WMAPE</div>
<div class="g gc gr" style="left:1248px;top:233px;width:101px;height:26px;"><span>99.99</span></div>
<div class="g gc" style="left:1127px;top:259px;width:121px;height:26px">MSE</div>
<div class="g gc gr" style="left:1248px;top:259px;width:101px;height:26px;"><span>92199351.44</span></div>
<div class="g gc" style="left:1127px;top:285px;width:121px;height:26px">Variance</div>
<div class="g gc gr" style="left:1248px;top:285px;width:101px;height:26px;"><span>47539522.99</span></div>
<div class="g gc" style="left:1127px;top:311px;width:121px;height:26px">ME</div>
<div class="g gc gr" style="left:1248px;top:311px;width:101px;height:26px;"><span>314411.73</span></div>
<div class="g gc" style="left:1127px;top:337px;width:121px;height:26px">RME</div>
<div class="g gc gr" style="left:1248px;top:337px;width:101px;height:26px;"><span>99.99</span></div>
<div class="g gh" style="left:1349px;top:103px;width:121px;height:26px">Parameter</div>
<div class="g gh" style="left:1470px;top:103px;width:101px;height:26px">Value</div>
<div class="g gc" style="left:1349px;top:129px;width:121px;height:26px">PVE</div>
<div class="g gc gr" style="left:1470px;top:129px;width:101px;height:26px;"><span>-1312.99</span></div>
<div class="g gc" style="left:1349px;top:155px;width:121px;height:26px">Tracking Signal</div>
<div class="g gc gr" style="left:1470px;top:155px;width:101px;height:26px;"><span>1.00</span></div>
<div class="g gc" style="left:1349px;top:181px;width:121px;height:26px">Adjustment Factor</div>
<div class="g gc gr" style="left:1470px;top:181px;width:101px;height:26px;"><span>-92.61</span></div>
<div class="g gc" style="left:1349px;top:207px;width:121px;height:26px">Performance Factor</div>
<div class="g gc gr" style="left:1470px;top:207px;width:101px;height:26px;"><span>153.66</span></div>
<div class="g gc" style="left:1349px;top:233px;width:121px;height:26px">Service Level</div>
<div class="g gc gr" style="left:1470px;top:233px;width:101px;height:26px;"><span>100.00</span></div>
<div class="g gc" style="left:1349px;top:259px;width:121px;height:26px">Fill Rate Service</div>
<div class="g gc gr" style="left:1470px;top:259px;width:101px;height:26px;"><span>100.00</span></div>
<div class="g gc" style="left:1349px;top:285px;width:121px;height:26px">R Squared</div>
<div class="g gc gr" style="left:1470px;top:285px;width:101px;height:26px;"><span>0.00</span></div>
<div class="g gc" style="left:1349px;top:311px;width:121px;height:26px">R Bar Squared</div>
<div class="g gc gr" style="left:1470px;top:311px;width:101px;height:26px;"><span>0.00</span></div>
<div class="g gc" style="left:1349px;top:337px;width:121px;height:26px">Season Correlation</div>
<div class="g gc gr" style="left:1470px;top:337px;width:101px;height:26px;"><span>0.00</span></div>
<div class="g gh" style="left:1571px;top:103px;width:121px;height:26px">Parameter</div>
<div class="g gh" style="left:1692px;top:103px;width:101px;height:26px">Value</div>
<div class="g gc" style="left:1571px;top:129px;width:121px;height:26px">Confirmed Date</div>
<div class="g gc gv" style="left:1692px;top:129px;width:101px;height:26px;"></div>
<div class="g gc" style="left:1571px;top:155px;width:121px;height:26px">Status</div>
<div class="g gc gv" style="left:1692px;top:155px;width:101px;height:26px;background:#fff;">Released</div>
<div class="dd" style="left:1768px;top:156px"><svg width="22" height="21" viewBox="0 0 22 21" style="position:absolute;left:0;top:0"><path d="M5.5 8.5 L11 14 L16.5 8.5" fill="none" stroke="#6a6a6a" stroke-width="1.1"/></svg></div>
<div class="g gc" style="left:1571px;top:181px;width:121px;height:26px">Status Change</div>
<div class="g gc gv" style="left:1692px;top:181px;width:101px;height:26px;"></div>
<div class="g gc" style="left:1571px;top:207px;width:121px;height:26px">Status Change</div>
<div class="g gc gv" style="left:1692px;top:207px;width:101px;height:26px;"></div>
<div class="g gc" style="left:1571px;top:233px;width:121px;height:26px">Transaction Status</div>
<div class="g gc gv" style="left:1692px;top:233px;width:101px;height:26px;"></div>
<div class="a" style="left:17px;top:129px;width:122px;height:27px;border:solid #1a1a1a;border-width:1px 2px 2px 1px"></div>
<div class="ts" style="left:0px;top:364px;width:290px;height:39px;border-top:1px solid #a0a0a0;border-right:1px solid #a0a0a0"></div>
<div class="fb" style="left:4px;top:368px;width:252px;height:31px">
<div class="fbh" style="left:1px;width:123px">Classification</div>
<div class="fbh" style="left:125px;width:123px">Description</div>
<div class="fbv" style="left:1px;width:124px;background:#fdfdc9;border-right:1px solid #eeeedd"><span>All</span></div>
<div class="fbv" style="left:125px;width:124px;background:#fdfdc9"><span>All</span></div>
</div>
<svg class="tri" style="left:266px;top:378px" width="13" height="8" viewBox="0 0 13 8"><path d="M1.6 2.3 L11.4 2.3 L6.5 6.9 Z" fill="#fff" stroke="#000" stroke-width="1.9" stroke-linejoin="miter"/></svg>
<div class="ts" style="left:288px;top:403px;width:290px;height:40px;border-top:1px solid #a0a0a0;border-right:1px solid #a0a0a0"></div>
<div class="vs" style="left:287px;top:405px;height:38px"></div>
<div class="fb" style="left:292px;top:407px;width:252px;height:31px">
<div class="fbh" style="left:1px;width:123px">Campaign ID</div>
<div class="fbh" style="left:125px;width:123px">Description</div>
<div class="fbv" style="left:1px;width:124px;background:#fdfdc9;border-right:1px solid #eeeedd"><span>All</span></div>
<div class="fbv" style="left:125px;width:124px;background:#fdfdc9"><span>All</span></div>
</div>
<svg class="tri" style="left:553px;top:417px" width="13" height="8" viewBox="0 0 13 8"><path d="M1.6 2.3 L11.4 2.3 L6.5 6.9 Z" fill="#fff" stroke="#000" stroke-width="1.9" stroke-linejoin="miter"/></svg>
<div class="ts" style="left:576px;top:443px;width:165px;height:40px;border-top:1px solid #a0a0a0;border-right:1px solid #a0a0a0"></div>
<div class="vs" style="left:575px;top:445px;height:39px"></div>
<div class="fb" style="left:580px;top:447px;width:127px;height:31px">
<div class="fbh" style="left:1px;width:123px">Timeline</div>
<div class="fbv" style="left:1px;width:123px;background:#fff"><span>Standard(Weekly)</span></div>
</div>
<svg class="tri" style="left:717px;top:457px" width="13" height="8" viewBox="0 0 13 8"><path d="M1.6 2.3 L11.4 2.3 L6.5 6.9 Z" fill="#fff" stroke="#000" stroke-width="1.9" stroke-linejoin="miter"/></svg>
<div class="ts" style="left:739px;top:483px;width:165px;height:40px;border-top:1px solid #a0a0a0;border-right:1px solid #a0a0a0"></div>
<div class="vs" style="left:738px;top:485px;height:39px"></div>
<div class="fb" style="left:743px;top:487px;width:127px;height:31px">
<div class="fbh" style="left:1px;width:123px">Status</div>
<div class="fbv" style="left:1px;width:123px;background:#fdfdc9"><span>All</span></div>
</div>
<svg class="tri" style="left:880px;top:497px" width="13" height="8" viewBox="0 0 13 8"><path d="M1.6 2.3 L11.4 2.3 L6.5 6.9 Z" fill="#fff" stroke="#000" stroke-width="1.9" stroke-linejoin="miter"/></svg>
<div class="a" style="left:0;top:523px;width:210px;height:1px;background:#a0a0a0"></div>
<div class="a" style="left:0;top:524px;width:206px;height:271px;background:#f0f0f0"></div>
<div class="a" style="left:206px;top:524px;width:4px;height:358px;background:#f0f0f0"></div>
<div class="a" style="left:3px;top:528px;width:83px;height:1px;background:#c0c0c0;box-shadow:0 1px 0 #fff"></div>
<div class="a" style="left:123px;top:528px;width:84px;height:1px;background:#c0c0c0;box-shadow:0 1px 0 #fff"></div>
<div class="a" style="left:3px;top:532px;width:83px;height:1px;background:#c0c0c0;box-shadow:0 1px 0 #fff"></div>
<div class="a" style="left:123px;top:532px;width:84px;height:1px;background:#c0c0c0;box-shadow:0 1px 0 #fff"></div>
<div class="q" style="left:90px;top:525px;font-size:9.5px;line-height:11px;color:#000;-webkit-text-stroke:0.2px #000">Query</div>
<div class="q" style="left:5px;top:544px;font-size:9.3px;line-height:11px;color:#000;letter-spacing:-0.1px;-webkit-text-stroke:0.25px #000">Saved Queries:</div>
<div class="a" style="left:104px;top:540px;width:50px;height:25px;background:#fff;border:1px solid #b8b8b8;border-radius:2px"><svg width="48" height="23" style="position:absolute;left:0;top:0"><path d="M30 10 L35 15 L40 10" fill="none" stroke="#404040" stroke-width="1.2"/></svg></div>
<div class="a" style="left:165px;top:541px;width:50px;height:22px;background:#fdfdfd;border:1px solid #c8c8c8;border-radius:3px;font-size:9.5px;line-height:20px;padding-left:17px;color:#000;-webkit-text-stroke:0.25px #000">Save</div>
<div class="a" style="left:3px;top:570px;width:199px;height:25px;background:#b0b0b0"></div>
<div class="a" style="left:8px;top:575px;width:100px;height:20px;background:#f0f0f0;border-radius:5px 5px 0 0;font-family:'Liberation Mono',monospace;font-size:13.2px;line-height:22px;text-align:center;color:#222">Conditions</div>
<div class="a" style="left:118px;top:575px;width:44px;height:20px;background:#c4c4c4;border-radius:5px 5px 0 0;font-family:'Liberation Mono',monospace;font-size:13.2px;line-height:22px;text-align:center;color:#222">Sql</div>
<div class="a" style="left:3px;top:595px;width:199px;height:4px;background:linear-gradient(#e6e6e6,#f4f4f4)"></div>
<div class="a" style="left:3px;top:600px;width:173px;height:135px;background:#fff;overflow:hidden">
<div class="a" style="left:0;top:0;width:174px;height:20px;background:#8eaedc"></div>
<div class="q" style="left:4px;top:0;font-size:13px;line-height:20px;color:#fff">Field</div>
<div class="q" style="left:55px;top:0;font-size:13px;line-height:20px;color:#fff">Condition</div>
<div class="q" style="left:157px;top:0;font-size:13px;line-height:20px;color:#fff">S</div>
<div class="a" style="left:0;top:20px;width:174px;height:1px;background:#000;box-shadow:0 1px 0 rgba(0,0,0,0.3)"></div>
<div class="q" style="left:2px;top:21px;width:49px;font-size:13px;line-height:19px;color:#000">Part No</div>
<div class="a" style="left:139px;top:23px;width:5px;height:15px;background:#e4e4e4;border:1px solid #cfcfcf"></div>
<div class="a" style="left:140px;top:31px;width:3px;height:4px;background:#3060c0"></div>
<div class="a" style="left:0;top:40px;width:174px;height:1px;background:#000;box-shadow:0 1px 0 rgba(0,0,0,0.3)"></div>
<div class="q" style="left:2px;top:41px;width:49px;font-size:13px;line-height:19px;color:#000">Part Des</div>
<div class="a" style="left:139px;top:43px;width:5px;height:15px;background:#e4e4e4;border:1px solid #cfcfcf"></div>
<div class="a" style="left:0;top:60px;width:174px;height:1px;background:#000;box-shadow:0 1px 0 rgba(0,0,0,0.3)"></div>
<div class="q" style="left:2px;top:61px;width:49px;font-size:13px;line-height:19px;color:#000">Flow ID</div>
<div class="q" style="left:53px;top:61px;width:84px;font-size:13px;line-height:19px;color:#000">#CURRENT_F</div>
<div class="a" style="left:139px;top:63px;width:5px;height:15px;background:#e4e4e4;border:1px solid #cfcfcf"></div>
<div class="a" style="left:140px;top:71px;width:3px;height:4px;background:#3060c0"></div>
<div class="a" style="left:0;top:80px;width:174px;height:1px;background:#000;box-shadow:0 1px 0 rgba(0,0,0,0.3)"></div>
<div class="q" style="left:2px;top:81px;width:49px;font-size:13px;line-height:19px;color:#000">Flow De</div>
<div class="a" style="left:139px;top:83px;width:5px;height:15px;background:#e4e4e4;border:1px solid #cfcfcf"></div>
<div class="a" style="left:0;top:100px;width:174px;height:1px;background:#000;box-shadow:0 1px 0 rgba(0,0,0,0.3)"></div>
<div class="q" style="left:2px;top:101px;width:49px;font-size:13px;line-height:19px;color:#000">Flow Typ</div>
<div class="a" style="left:139px;top:103px;width:5px;height:15px;background:#e4e4e4;border:1px solid #cfcfcf"></div>
<div class="a" style="left:0;top:120px;width:174px;height:1px;background:#000;box-shadow:0 1px 0 rgba(0,0,0,0.3)"></div>
<div class="q" style="left:2px;top:121px;width:49px;font-size:13px;line-height:19px;color:#000">Part Pro</div>
<div class="a" style="left:139px;top:123px;width:5px;height:15px;background:#e4e4e4;border:1px solid #cfcfcf"></div>
<div class="a" style="left:51px;top:0;width:1px;height:135px;background:#000;box-shadow:1px 0 0 rgba(0,0,0,0.35)"></div>
<div class="a" style="left:137px;top:0;width:1px;height:135px;background:#000;box-shadow:1px 0 0 rgba(0,0,0,0.35)"></div>
<div class="a" style="left:145px;top:0;width:1px;height:135px;background:#000;box-shadow:1px 0 0 rgba(0,0,0,0.35)"></div>
<div class="a" style="left:153px;top:0;width:1px;height:135px;background:#000;box-shadow:1px 0 0 rgba(0,0,0,0.35)"></div>
</div>
<div class="a" style="left:187px;top:627px;width:5px;height:24px;background:#8a8a8a;border-radius:3px"></div>
<div class="a" style="left:29px;top:745px;width:78px;height:5px;background:#808080;border-radius:3px"></div>
<div class="a" style="left:10px;top:768px;width:98px;height:18px;background:#fcfcfc;border:1px solid #c8c8c8;border-radius:4px;font-size:12.6px;line-height:16px;text-align:center">Group</div>
<div class="a" style="left:120px;top:768px;width:95px;height:18px;background:#fcfcfc;border:1px solid #c8c8c8;border-radius:4px;font-size:12.6px;line-height:16px;padding-left:36px">List</div>
<div class="a" style="left:0;top:795px;width:205px;height:87px;background:#fff"></div>
<div class="a" style="left:205px;top:524px;width:5px;height:358px;background:#f0f0f0"></div>
<div class="a" style="left:210px;top:523px;width:1621px;height:2px;background:#505050"></div>
<div class="a" style="left:210px;top:523px;width:2px;height:359px;background:#505050"></div>
<div class="a" style="left:212px;top:525px;width:1619px;height:357px;background:linear-gradient(#c3d0e0 0px,#d2ddea 30px,#dbe5f1 46px,#d6e2ef 100%);border-radius:4px 0 0 0"></div>
<div class="a" style="left:224px;top:542px;width:22px;height:18px;background:linear-gradient(135deg,#fff,#dde 60%,#bbc);border:1px solid #8a96a8;border-radius:2px"><div style="position:absolute;left:2px;top:3px;width:9px;height:11px;background:linear-gradient(160deg,#3a7fa0,#3aa070)"></div><div style="position:absolute;left:18px;top:3px;width:2px;height:4px;background:#3a8aa8"></div></div>
<div class="a" style="left:252px;top:544px;font-size:17px;line-height:22px;color:#8f969f;white-space:nowrap">Forecast Table</div>
<div class="a" style="left:1690px;top:538px;width:49px;height:29px;border:1px solid #8fa0b8;border-radius:3px;background:linear-gradient(#d2dcea,#c6d2e2)"><div style="position:absolute;left:15px;top:12px;width:17px;height:6px;background:#fff;border:1px solid #555;border-radius:1px"></div></div>
<div class="a" style="left:1742px;top:538px;width:49px;height:29px;border:1px solid #8fa0b8;border-radius:3px;background:linear-gradient(#d2dcea,#c6d2e2)"><div style="position:absolute;left:15px;top:7px;width:17px;height:15px;background:#fff;border:1px solid #555;border-radius:1px"><div style="position:absolute;left:3px;top:3px;width:9px;height:7px;background:#c6d2e2;border:1px solid #555"></div></div></div>
<div class="a" style="left:1794px;top:538px;width:49px;height:29px;border:1px solid #8fa0b8;border-radius:3px;background:linear-gradient(#d2dcea,#c6d2e2)"><svg style="position:absolute;left:16px;top:6px" width="18" height="17" viewBox="0 0 18 17"><path d="M2.5 2.5 L15.5 14.5 M15.5 2.5 L2.5 14.5" stroke="#5a5a5a" stroke-width="5.6" stroke-linecap="round"/><path d="M2.5 2.5 L15.5 14.5 M15.5 2.5 L2.5 14.5" stroke="#fff" stroke-width="3.4" stroke-linecap="round"/></svg></div>
<div class="a" style="left:222px;top:570px;width:1609px;height:312px;background:#f7f7f7;border-left:3px solid #505050;border-top:3px solid #505050"></div>
<div class="ft fth" style="left:225px;top:573px;width:133px;height:23px;background:#f0f0f0;border-bottom:2px solid #b4c6dc;border-right-color:#c8d4e2;"></div>
<div class="ft fth" style="left:358px;top:573px;width:97px;height:23px;">Adj.Deman</div>
<div class="ft fth" style="left:455px;top:573px;width:97px;height:23px;">Inh.Deman</div>
<div class="ft fth" style="left:552px;top:573px;width:97px;height:23px;">Hist.Foreca</div>
<div class="ft fth" style="left:649px;top:573px;width:97px;height:23px;">Sold Out</div>
<div class="ft fth" style="left:746px;top:573px;width:97px;height:23px;">Qty Lost</div>
<div class="ft fth" style="left:843px;top:573px;width:121px;height:23px;">Holiday</div>
<div class="ft fth" style="left:964px;top:573px;width:97px;height:23px;">Budget</div>
<div class="ft fth" style="left:1061px;top:573px;width:97px;height:23px;">Target SP</div>
<div class="ft fth" style="left:1158px;top:573px;width:97px;height:23px;">Events</div>
<div class="ft fth" style="left:1255px;top:573px;width:97px;height:23px;background:linear-gradient(#fbe0a2,#f6c874 60%,#f0b85c);">Adj.Foreca</div>
<div class="ft fth" style="left:1352px;top:573px;width:97px;height:23px;">Sys.Foreca</div>
<div class="ft fth" style="left:1449px;top:573px;width:97px;height:23px;">Expl.Forec</div>
<div class="ft fth" style="left:1546px;top:573px;width:97px;height:23px;">Col.Foreca</div>
<div class="ft fth" style="left:1643px;top:573px;width:97px;height:23px;">Campaign</div>
<div class="ft fth" style="left:1740px;top:573px;width:79px;height:23px;text-align:right;padding-right:5px;">Period</div>
<svg class="a" style="left:341px;top:579px" width="14" height="14" viewBox="0 0 14 14"><path d="M12.5 1.5 L12.5 12.5 L1.5 12.5 Z" fill="none" stroke="#a8bcd6" stroke-width="1.2"/></svg>
<div class="ft ftc" style="left:225px;top:596px;width:133px;height:23px;background:#efefef;text-align:center;padding-right:0;">2026-41</div>
<div class="ft ftc" style="left:358px;top:596px;width:97px;height:23px;"></div>
<div class="ft ftc" style="left:455px;top:596px;width:97px;height:23px;"></div>
<div class="ft ftc" style="left:552px;top:596px;width:97px;height:23px;"></div>
<div class="ft ftc" style="left:649px;top:596px;width:97px;height:23px;"></div>
<div class="ft ftc" style="left:746px;top:596px;width:97px;height:23px;"></div>
<div class="ft ftc" style="left:843px;top:596px;width:121px;height:23px;">0.00</div>
<div class="ft ftc" style="left:964px;top:596px;width:97px;height:23px;background:#fff;"></div>
<div class="ft ftc" style="left:1061px;top:596px;width:97px;height:23px;background:#fff;"></div>
<div class="ft ftc" style="left:1158px;top:596px;width:97px;height:23px;">0.00</div>
<div class="ft ftc" style="left:1255px;top:596px;width:97px;height:23px;background:#fff;font-weight:bold;">342,414.14</div>
<div class="ft ftc" style="left:1352px;top:596px;width:97px;height:23px;text-align:left;padding-left:4px;">316,391.25</div>
<div class="ft ftc" style="left:1449px;top:596px;width:97px;height:23px;"></div>
<div class="ft ftc" style="left:1546px;top:596px;width:97px;height:23px;"></div>
<div class="ft ftc" style="left:1643px;top:596px;width:97px;height:23px;">0.00</div>
<div class="ft ftc" style="left:1740px;top:596px;width:79px;height:23px;"></div>
<div class="ft ftc" style="left:225px;top:619px;width:133px;height:23px;background:#efefef;text-align:center;padding-right:0;">2026-42</div>
<div class="ft ftc" style="left:358px;top:619px;width:97px;height:23px;"></div>
<div class="ft ftc" style="left:455px;top:619px;width:97px;height:23px;"></div>
<div class="ft ftc" style="left:552px;top:619px;width:97px;height:23px;"></div>
<div class="ft ftc" style="left:649px;top:619px;width:97px;height:23px;"></div>
<div class="ft ftc" style="left:746px;top:619px;width:97px;height:23px;"></div>
<div class="ft ftc" style="left:843px;top:619px;width:121px;height:23px;">0.00</div>
<div class="ft ftc" style="left:964px;top:619px;width:97px;height:23px;background:#fff;"></div>
<div class="ft ftc" style="left:1061px;top:619px;width:97px;height:23px;background:#fff;"></div>
<div class="ft ftc" style="left:1158px;top:619px;width:97px;height:23px;">0.00</div>
<div class="ft ftc" style="left:1255px;top:619px;width:97px;height:23px;background:#fff;font-weight:bold;">343,901.14</div>
<div class="ft ftc" style="left:1352px;top:619px;width:97px;height:23px;text-align:left;padding-left:4px;">316,392.97</div>
<div class="ft ftc" style="left:1449px;top:619px;width:97px;height:23px;"></div>
<div class="ft ftc" style="left:1546px;top:619px;width:97px;height:23px;"></div>
<div class="ft ftc" style="left:1643px;top:619px;width:97px;height:23px;">0.00</div>
<div class="ft ftc" style="left:1740px;top:619px;width:79px;height:23px;"></div>
<div class="ft ftc" style="left:225px;top:642px;width:133px;height:23px;background:#efefef;text-align:center;padding-right:0;">2026-43</div>
<div class="ft ftc" style="left:358px;top:642px;width:97px;height:23px;"></div>
<div class="ft ftc" style="left:455px;top:642px;width:97px;height:23px;"></div>
<div class="ft ftc" style="left:552px;top:642px;width:97px;height:23px;"></div>
<div class="ft ftc" style="left:649px;top:642px;width:97px;height:23px;"></div>
<div class="ft ftc" style="left:746px;top:642px;width:97px;height:23px;"></div>
<div class="ft ftc" style="left:843px;top:642px;width:121px;height:23px;">0.00</div>
<div class="ft ftc" style="left:964px;top:642px;width:97px;height:23px;background:#fff;"></div>
<div class="ft ftc" style="left:1061px;top:642px;width:97px;height:23px;background:#fff;"></div>
<div class="ft ftc" style="left:1158px;top:642px;width:97px;height:23px;">0.00</div>
<div class="ft ftc" style="left:1255px;top:642px;width:97px;height:23px;background:#fff;font-weight:bold;">346,524.00</div>
<div class="ft ftc" style="left:1352px;top:642px;width:97px;height:23px;text-align:left;padding-left:4px;">316,394.52</div>
<div class="ft ftc" style="left:1449px;top:642px;width:97px;height:23px;"></div>
<div class="ft ftc" style="left:1546px;top:642px;width:97px;height:23px;"></div>
<div class="ft ftc" style="left:1643px;top:642px;width:97px;height:23px;">0.00</div>
<div class="ft ftc" style="left:1740px;top:642px;width:79px;height:23px;"></div>
<div class="ft ftc" style="left:225px;top:665px;width:133px;height:23px;background:#efefef;text-align:center;padding-right:0;">2026-44</div>
<div class="ft ftc" style="left:358px;top:665px;width:97px;height:23px;"></div>
<div class="ft ftc" style="left:455px;top:665px;width:97px;height:23px;"></div>
<div class="ft ftc" style="left:552px;top:665px;width:97px;height:23px;"></div>
<div class="ft ftc" style="left:649px;top:665px;width:97px;height:23px;"></div>
<div class="ft ftc" style="left:746px;top:665px;width:97px;height:23px;"></div>
<div class="ft ftc" style="left:843px;top:665px;width:121px;height:23px;">0.00</div>
<div class="ft ftc" style="left:964px;top:665px;width:97px;height:23px;background:#fff;"></div>
<div class="ft ftc" style="left:1061px;top:665px;width:97px;height:23px;background:#fff;"></div>
<div class="ft ftc" style="left:1158px;top:665px;width:97px;height:23px;">-1.71</div>
<div class="ft ftc" style="left:1255px;top:665px;width:97px;height:23px;background:#fff;font-weight:bold;">334,524.43</div>
<div class="ft ftc" style="left:1352px;top:665px;width:97px;height:23px;text-align:left;padding-left:4px;">316,395.91</div>
<div class="ft ftc" style="left:1449px;top:665px;width:97px;height:23px;"></div>
<div class="ft ftc" style="left:1546px;top:665px;width:97px;height:23px;"></div>
<div class="ft ftc" style="left:1643px;top:665px;width:97px;height:23px;">0.00</div>
<div class="ft ftc" style="left:1740px;top:665px;width:79px;height:23px;"></div>
<div class="ft ftc" style="left:225px;top:688px;width:133px;height:23px;background:#efefef;text-align:center;padding-right:0;">2026-45</div>
<div class="ft ftc" style="left:358px;top:688px;width:97px;height:23px;"></div>
<div class="ft ftc" style="left:455px;top:688px;width:97px;height:23px;"></div>
<div class="ft ftc" style="left:552px;top:688px;width:97px;height:23px;"></div>
<div class="ft ftc" style="left:649px;top:688px;width:97px;height:23px;"></div>
<div class="ft ftc" style="left:746px;top:688px;width:97px;height:23px;"></div>
<div class="ft ftc" style="left:843px;top:688px;width:121px;height:23px;">0.00</div>
<div class="ft ftc" style="left:964px;top:688px;width:97px;height:23px;background:#fff;"></div>
<div class="ft ftc" style="left:1061px;top:688px;width:97px;height:23px;background:#fff;"></div>
<div class="ft ftc" style="left:1158px;top:688px;width:97px;height:23px;">-6.00</div>
<div class="ft ftc" style="left:1255px;top:688px;width:97px;height:23px;background:#fff;font-weight:bold;">315,974.29</div>
<div class="ft ftc" style="left:1352px;top:688px;width:97px;height:23px;text-align:left;padding-left:4px;">316,397.17</div>
<div class="ft ftc" style="left:1449px;top:688px;width:97px;height:23px;"></div>
<div class="ft ftc" style="left:1546px;top:688px;width:97px;height:23px;"></div>
<div class="ft ftc" style="left:1643px;top:688px;width:97px;height:23px;">0.00</div>
<div class="ft ftc" style="left:1740px;top:688px;width:79px;height:23px;"></div>
<div class="ft ftc" style="left:225px;top:711px;width:133px;height:23px;background:#efefef;text-align:center;padding-right:0;">2026-46</div>
<div class="ft ftc" style="left:358px;top:711px;width:97px;height:23px;"></div>
<div class="ft ftc" style="left:455px;top:711px;width:97px;height:23px;"></div>
<div class="ft ftc" style="left:552px;top:711px;width:97px;height:23px;"></div>
<div class="ft ftc" style="left:649px;top:711px;width:97px;height:23px;"></div>
<div class="ft ftc" style="left:746px;top:711px;width:97px;height:23px;"></div>
<div class="ft ftc" style="left:843px;top:711px;width:121px;height:23px;">0.00</div>
<div class="ft ftc" style="left:964px;top:711px;width:97px;height:23px;background:#fff;"></div>
<div class="ft ftc" style="left:1061px;top:711px;width:97px;height:23px;background:#fff;"></div>
<div class="ft ftc" style="left:1158px;top:711px;width:97px;height:23px;">-6.00</div>
<div class="ft ftc" style="left:1255px;top:711px;width:97px;height:23px;background:#fff;font-weight:bold;">319,228.29</div>
<div class="ft ftc" style="left:1352px;top:711px;width:97px;height:23px;text-align:left;padding-left:4px;">316,398.30</div>
<div class="ft ftc" style="left:1449px;top:711px;width:97px;height:23px;"></div>
<div class="ft ftc" style="left:1546px;top:711px;width:97px;height:23px;"></div>
<div class="ft ftc" style="left:1643px;top:711px;width:97px;height:23px;">0.00</div>
<div class="ft ftc" style="left:1740px;top:711px;width:79px;height:23px;"></div>
<div class="ft ftc" style="left:225px;top:734px;width:133px;height:23px;background:#efefef;text-align:center;padding-right:0;">2026-47</div>
<div class="ft ftc" style="left:358px;top:734px;width:97px;height:23px;"></div>
<div class="ft ftc" style="left:455px;top:734px;width:97px;height:23px;"></div>
<div class="ft ftc" style="left:552px;top:734px;width:97px;height:23px;"></div>
<div class="ft ftc" style="left:649px;top:734px;width:97px;height:23px;"></div>
<div class="ft ftc" style="left:746px;top:734px;width:97px;height:23px;"></div>
<div class="ft ftc" style="left:843px;top:734px;width:121px;height:23px;">0.00</div>
<div class="ft ftc" style="left:964px;top:734px;width:97px;height:23px;background:#fff;"></div>
<div class="ft ftc" style="left:1061px;top:734px;width:97px;height:23px;background:#fff;"></div>
<div class="ft ftc" style="left:1158px;top:734px;width:97px;height:23px;">-6.00</div>
<div class="ft ftc" style="left:1255px;top:734px;width:97px;height:23px;background:#fff;font-weight:bold;">330,564.00</div>
<div class="ft ftc" style="left:1352px;top:734px;width:97px;height:23px;text-align:left;padding-left:4px;">316,399.31</div>
<div class="ft ftc" style="left:1449px;top:734px;width:97px;height:23px;"></div>
<div class="ft ftc" style="left:1546px;top:734px;width:97px;height:23px;"></div>
<div class="ft ftc" style="left:1643px;top:734px;width:97px;height:23px;">0.00</div>
<div class="ft ftc" style="left:1740px;top:734px;width:79px;height:23px;"></div>
<div class="ft ftc" style="left:225px;top:757px;width:133px;height:23px;background:#efefef;text-align:center;padding-right:0;">2026-48</div>
<div class="ft ftc" style="left:358px;top:757px;width:97px;height:23px;"></div>
<div class="ft ftc" style="left:455px;top:757px;width:97px;height:23px;"></div>
<div class="ft ftc" style="left:552px;top:757px;width:97px;height:23px;"></div>
<div class="ft ftc" style="left:649px;top:757px;width:97px;height:23px;"></div>
<div class="ft ftc" style="left:746px;top:757px;width:97px;height:23px;"></div>
<div class="ft ftc" style="left:843px;top:757px;width:121px;height:23px;">0.00</div>
<div class="ft ftc" style="left:964px;top:757px;width:97px;height:23px;background:#fff;"></div>
<div class="ft ftc" style="left:1061px;top:757px;width:97px;height:23px;background:#fff;"></div>
<div class="ft ftc" style="left:1158px;top:757px;width:97px;height:23px;">-6.00</div>
<div class="ft ftc" style="left:1255px;top:757px;width:97px;height:23px;background:#fff;font-weight:bold;">335,565.57</div>
<div class="ft ftc" style="left:1352px;top:757px;width:97px;height:23px;text-align:left;padding-left:4px;">316,400.23</div>
<div class="ft ftc" style="left:1449px;top:757px;width:97px;height:23px;"></div>
<div class="ft ftc" style="left:1546px;top:757px;width:97px;height:23px;"></div>
<div class="ft ftc" style="left:1643px;top:757px;width:97px;height:23px;">0.00</div>
<div class="ft ftc" style="left:1740px;top:757px;width:79px;height:23px;"></div>
<div class="ft ftc" style="left:225px;top:780px;width:133px;height:23px;background:#efefef;text-align:center;padding-right:0;">2026-49</div>
<div class="ft ftc" style="left:358px;top:780px;width:97px;height:23px;"></div>
<div class="ft ftc" style="left:455px;top:780px;width:97px;height:23px;"></div>
<div class="ft ftc" style="left:552px;top:780px;width:97px;height:23px;"></div>
<div class="ft ftc" style="left:649px;top:780px;width:97px;height:23px;"></div>
<div class="ft ftc" style="left:746px;top:780px;width:97px;height:23px;"></div>
<div class="ft ftc" style="left:843px;top:780px;width:121px;height:23px;">0.00</div>
<div class="ft ftc" style="left:964px;top:780px;width:97px;height:23px;background:#fff;"></div>
<div class="ft ftc" style="left:1061px;top:780px;width:97px;height:23px;background:#fff;"></div>
<div class="ft ftc" style="left:1158px;top:780px;width:97px;height:23px;">-4.29</div>
<div class="ft ftc" style="left:1255px;top:780px;width:97px;height:23px;background:#fff;font-weight:bold;">329,980.14</div>
<div class="ft ftc" style="left:1352px;top:780px;width:97px;height:23px;text-align:left;padding-left:4px;">316,401.05</div>
<div class="ft ftc" style="left:1449px;top:780px;width:97px;height:23px;"></div>
<div class="ft ftc" style="left:1546px;top:780px;width:97px;height:23px;"></div>
<div class="ft ftc" style="left:1643px;top:780px;width:97px;height:23px;">0.00</div>
<div class="ft ftc" style="left:1740px;top:780px;width:79px;height:23px;"></div>
<div class="ft ftc" style="left:225px;top:803px;width:133px;height:23px;background:#efefef;text-align:center;padding-right:0;">2026-50</div>
<div class="ft ftc" style="left:358px;top:803px;width:97px;height:23px;"></div>
<div class="ft ftc" style="left:455px;top:803px;width:97px;height:23px;"></div>
<div class="ft ftc" style="left:552px;top:803px;width:97px;height:23px;"></div>
<div class="ft ftc" style="left:649px;top:803px;width:97px;height:23px;"></div>
<div class="ft ftc" style="left:746px;top:803px;width:97px;height:23px;"></div>
<div class="ft ftc" style="left:843px;top:803px;width:121px;height:23px;">0.00</div>
<div class="ft ftc" style="left:964px;top:803px;width:97px;height:23px;background:#fff;"></div>
<div class="ft ftc" style="left:1061px;top:803px;width:97px;height:23px;background:#fff;"></div>
<div class="ft ftc" style="left:1158px;top:803px;width:97px;height:23px;">0.00</div>
<div class="ft ftc" style="left:1255px;top:803px;width:97px;height:23px;background:#fff;font-weight:bold;">328,102.29</div>
<div class="ft ftc" style="left:1352px;top:803px;width:97px;height:23px;text-align:left;padding-left:4px;">316,401.79</div>
<div class="ft ftc" style="left:1449px;top:803px;width:97px;height:23px;"></div>
<div class="ft ftc" style="left:1546px;top:803px;width:97px;height:23px;"></div>
<div class="ft ftc" style="left:1643px;top:803px;width:97px;height:23px;">0.00</div>
<div class="ft ftc" style="left:1740px;top:803px;width:79px;height:23px;"></div>
<div class="ft ftc" style="left:225px;top:826px;width:133px;height:23px;background:#efefef;text-align:center;padding-right:0;">2026-51</div>
<div class="ft ftc" style="left:358px;top:826px;width:97px;height:23px;"></div>
<div class="ft ftc" style="left:455px;top:826px;width:97px;height:23px;"></div>
<div class="ft ftc" style="left:552px;top:826px;width:97px;height:23px;"></div>
<div class="ft ftc" style="left:649px;top:826px;width:97px;height:23px;"></div>
<div class="ft ftc" style="left:746px;top:826px;width:97px;height:23px;"></div>
<div class="ft ftc" style="left:843px;top:826px;width:121px;height:23px;">0.00</div>
<div class="ft ftc" style="left:964px;top:826px;width:97px;height:23px;background:#fff;"></div>
<div class="ft ftc" style="left:1061px;top:826px;width:97px;height:23px;background:#fff;"></div>
<div class="ft ftc" style="left:1158px;top:826px;width:97px;height:23px;">0.00</div>
<div class="ft ftc" style="left:1255px;top:826px;width:97px;height:23px;background:#fff;font-weight:bold;">339,740.00</div>
<div class="ft ftc" style="left:1352px;top:826px;width:97px;height:23px;text-align:left;padding-left:4px;">316,402.46</div>
<div class="ft ftc" style="left:1449px;top:826px;width:97px;height:23px;"></div>
<div class="ft ftc" style="left:1546px;top:826px;width:97px;height:23px;"></div>
<div class="ft ftc" style="left:1643px;top:826px;width:97px;height:23px;">0.00</div>
<div class="ft ftc" style="left:1740px;top:826px;width:79px;height:23px;"></div>
<div class="ft ftc" style="left:225px;top:849px;width:133px;height:23px;background:#efefef;text-align:center;padding-right:0;">2026-52</div>
<div class="ft ftc" style="left:358px;top:849px;width:97px;height:23px;"></div>
<div class="ft ftc" style="left:455px;top:849px;width:97px;height:23px;"></div>
<div class="ft ftc" style="left:552px;top:849px;width:97px;height:23px;"></div>
<div class="ft ftc" style="left:649px;top:849px;width:97px;height:23px;"></div>
<div class="ft ftc" style="left:746px;top:849px;width:97px;height:23px;"></div>
<div class="ft ftc" style="left:843px;top:849px;width:121px;height:23px;">0.00</div>
<div class="ft ftc" style="left:964px;top:849px;width:97px;height:23px;background:#fff;"></div>
<div class="ft ftc" style="left:1061px;top:849px;width:97px;height:23px;background:#fff;"></div>
<div class="ft ftc" style="left:1158px;top:849px;width:97px;height:23px;">0.00</div>
<div class="ft ftc" style="left:1255px;top:849px;width:97px;height:23px;background:#fff;font-weight:bold;">472,699.71</div>
<div class="ft ftc" style="left:1352px;top:849px;width:97px;height:23px;text-align:left;padding-left:4px;">316,403.06</div>
<div class="ft ftc" style="left:1449px;top:849px;width:97px;height:23px;"></div>
<div class="ft ftc" style="left:1546px;top:849px;width:97px;height:23px;"></div>
<div class="ft ftc" style="left:1643px;top:849px;width:97px;height:23px;">0.00</div>
<div class="ft ftc" style="left:1740px;top:849px;width:79px;height:23px;"></div>
<div class="ft ftc" style="left:225px;top:872px;width:133px;height:23px;background:#efefef;text-align:center;padding-right:0;">2027-01</div>
<div class="ft ftc" style="left:358px;top:872px;width:97px;height:23px;"></div>
<div class="ft ftc" style="left:455px;top:872px;width:97px;height:23px;"></div>
<div class="ft ftc" style="left:552px;top:872px;width:97px;height:23px;"></div>
<div class="ft ftc" style="left:649px;top:872px;width:97px;height:23px;"></div>
<div class="ft ftc" style="left:746px;top:872px;width:97px;height:23px;"></div>
<div class="ft ftc" style="left:843px;top:872px;width:121px;height:23px;">0.00</div>
<div class="ft ftc" style="left:964px;top:872px;width:97px;height:23px;background:#fff;"></div>
<div class="ft ftc" style="left:1061px;top:872px;width:97px;height:23px;background:#fff;"></div>
<div class="ft ftc" style="left:1158px;top:872px;width:97px;height:23px;">-6.71</div>
<div class="ft ftc" style="left:1255px;top:872px;width:97px;height:23px;background:#fff;font-weight:bold;">456,260.14</div>
<div class="ft ftc" style="left:1352px;top:872px;width:97px;height:23px;text-align:left;padding-left:4px;">316,404.00</div>
<div class="ft ftc" style="left:1449px;top:872px;width:97px;height:23px;"></div>
<div class="ft ftc" style="left:1546px;top:872px;width:97px;height:23px;"></div>
<div class="ft ftc" style="left:1643px;top:872px;width:97px;height:23px;">0.00</div>
<div class="ft ftc" style="left:1740px;top:872px;width:79px;height:23px;"></div>
<div class="a" style="left:1818px;top:573px;width:13px;height:309px;background:#7394c2"></div>
<div class="a" style="left:1818px;top:573px;width:13px;height:24px;background:#d6e4f4;border:1px solid #a8bcd8"><svg width="13" height="22" style="position:absolute;left:0;top:0;overflow:hidden"><path d="M9.5 6 L15.5 13 L3.5 13 Z" fill="#333"/></svg></div>
<div class="a" style="left:1818px;top:764px;width:13px;height:17px;background:#dae6f4;border:1px solid #a8bcd8"></div>
<div class="a" style="left:1402px;top:803px;width:430px;font-size:18.45px;line-height:23px;color:rgba(175,175,175,0.32);white-space:nowrap">Press the "Prnt Scrn" on your keyboard to take a<br>screenshot</div>
<div class="a" style="left:1390px;top:874px;width:310px;height:20px;background:rgba(250,250,250,0.97);border:1px solid #dedede;border-radius:10px"></div>
</body></html>
